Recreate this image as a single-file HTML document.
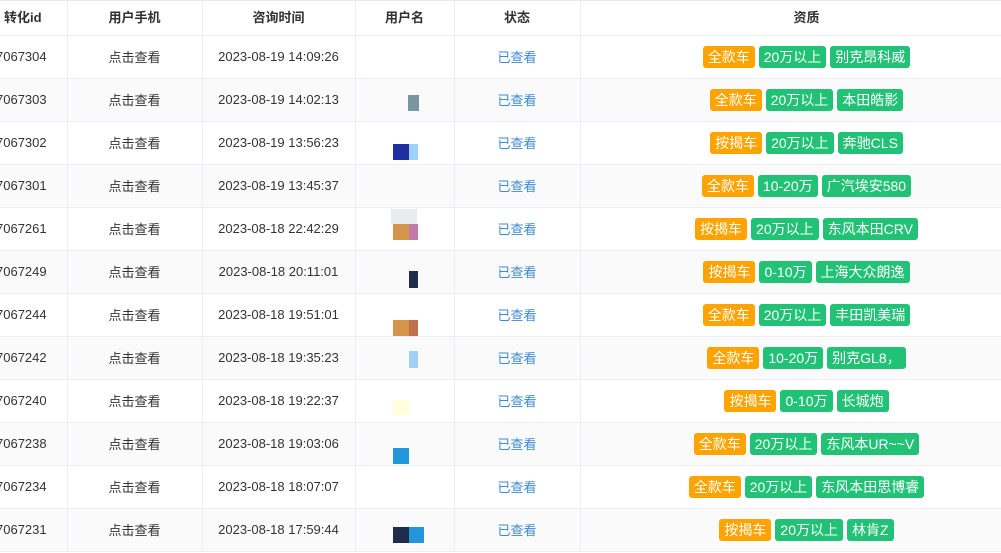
<!DOCTYPE html><html><head><meta charset="utf-8"><style>
body{margin:0;width:1001px;height:553px;overflow:hidden;background:#fff;font-family:"Liberation Sans","Noto Sans CJK SC",sans-serif;font-size:13px;color:#333;position:relative}
table{border-collapse:collapse;table-layout:fixed;width:1033px;position:absolute;left:0;top:0}
td,th{border-right:1px solid #ebeef5;border-bottom:1px solid #ebeef5;text-align:center;padding:0;height:42px;line-height:18px;white-space:nowrap;overflow:hidden;vertical-align:middle}
th{height:34px;font-weight:bold;color:#303133;border-top:1px solid #e8e8e8}
tr:nth-child(odd) td{background:#fafafa}
td.id,th.id{text-align:left;text-indent:-4px}
th.id{text-indent:4px}
.c{display:inline-block;position:relative;top:1px}
.s{color:#3d8ad6}
.t{display:inline-block;height:22px;line-height:22px;padding:0 5px;border-radius:3px;color:#fff;font-size:14px;margin:0 2px;vertical-align:middle}
.o{background:#ffa300}.g{background:#22c276}
.b{position:absolute}
</style></head><body>
<table>
<colgroup><col style="width:67px"><col style="width:135px"><col style="width:153px"><col style="width:99px"><col style="width:126px"><col style="width:453px"></colgroup>
<tr><th class="id">转化id</th><th>用户手机</th><th>咨询时间</th><th>用户名</th><th>状态</th><th>资质</th></tr>
<tr><td class="id">7067304</td><td><span class="c">点击查看</span></td><td>2023-08-19 14:09:26</td><td></td><td class="s"><span class="c">已查看</span></td><td><span class="t o">全款车</span><span class="t g">20万以上</span><span class="t g">别克昂科威</span></td></tr>
<tr><td class="id">7067303</td><td><span class="c">点击查看</span></td><td>2023-08-19 14:02:13</td><td></td><td class="s"><span class="c">已查看</span></td><td><span class="t o">全款车</span><span class="t g">20万以上</span><span class="t g">本田皓影</span></td></tr>
<tr><td class="id">7067302</td><td><span class="c">点击查看</span></td><td>2023-08-19 13:56:23</td><td></td><td class="s"><span class="c">已查看</span></td><td><span class="t o">按揭车</span><span class="t g">20万以上</span><span class="t g">奔驰CLS</span></td></tr>
<tr><td class="id">7067301</td><td><span class="c">点击查看</span></td><td>2023-08-19 13:45:37</td><td></td><td class="s"><span class="c">已查看</span></td><td><span class="t o">全款车</span><span class="t g">10-20万</span><span class="t g">广汽埃安580</span></td></tr>
<tr><td class="id">7067261</td><td><span class="c">点击查看</span></td><td>2023-08-18 22:42:29</td><td></td><td class="s"><span class="c">已查看</span></td><td><span class="t o">按揭车</span><span class="t g">20万以上</span><span class="t g">东风本田CRV</span></td></tr>
<tr><td class="id">7067249</td><td><span class="c">点击查看</span></td><td>2023-08-18 20:11:01</td><td></td><td class="s"><span class="c">已查看</span></td><td><span class="t o">按揭车</span><span class="t g">0-10万</span><span class="t g">上海大众朗逸</span></td></tr>
<tr><td class="id">7067244</td><td><span class="c">点击查看</span></td><td>2023-08-18 19:51:01</td><td></td><td class="s"><span class="c">已查看</span></td><td><span class="t o">全款车</span><span class="t g">20万以上</span><span class="t g">丰田凯美瑞</span></td></tr>
<tr><td class="id">7067242</td><td><span class="c">点击查看</span></td><td>2023-08-18 19:35:23</td><td></td><td class="s"><span class="c">已查看</span></td><td><span class="t o">全款车</span><span class="t g">10-20万</span><span class="t g">别克GL8，</span></td></tr>
<tr><td class="id">7067240</td><td><span class="c">点击查看</span></td><td>2023-08-18 19:22:37</td><td></td><td class="s"><span class="c">已查看</span></td><td><span class="t o">按揭车</span><span class="t g">0-10万</span><span class="t g">长城炮</span></td></tr>
<tr><td class="id">7067238</td><td><span class="c">点击查看</span></td><td>2023-08-18 19:03:06</td><td></td><td class="s"><span class="c">已查看</span></td><td><span class="t o">全款车</span><span class="t g">20万以上</span><span class="t g">东风本UR~~V</span></td></tr>
<tr><td class="id">7067234</td><td><span class="c">点击查看</span></td><td>2023-08-18 18:07:07</td><td></td><td class="s"><span class="c">已查看</span></td><td><span class="t o">全款车</span><span class="t g">20万以上</span><span class="t g">东风本田思博睿</span></td></tr>
<tr><td class="id">7067231</td><td><span class="c">点击查看</span></td><td>2023-08-18 17:59:44</td><td></td><td class="s"><span class="c">已查看</span></td><td><span class="t o">按揭车</span><span class="t g">20万以上</span><span class="t g">林肯Z</span></td></tr>
</table>
<div class="b" style="left:408px;top:95px;width:11px;height:16px;background:#7895a0"></div>
<div class="b" style="left:393px;top:144px;width:16px;height:16px;background:#1f2f9f"></div>
<div class="b" style="left:409px;top:144px;width:9px;height:16px;background:#9fd0ff"></div>
<div class="b" style="left:391px;top:209px;width:26px;height:15px;background:#e8ecef"></div>
<div class="b" style="left:393px;top:224px;width:16px;height:16px;background:#d4944a"></div>
<div class="b" style="left:409px;top:224px;width:9px;height:16px;background:#c07aaa"></div>
<div class="b" style="left:409px;top:271px;width:9px;height:17px;background:#1f2d4a"></div>
<div class="b" style="left:393px;top:320px;width:16px;height:16px;background:#d4944a"></div>
<div class="b" style="left:409px;top:320px;width:9px;height:16px;background:#c0704a"></div>
<div class="b" style="left:409px;top:351px;width:9px;height:17px;background:#9fcff5"></div>
<div class="b" style="left:393px;top:400px;width:16px;height:15px;background:#ffffdd"></div>
<div class="b" style="left:393px;top:448px;width:16px;height:16px;background:#2196db"></div>
<div class="b" style="left:393px;top:527px;width:16px;height:16px;background:#1f2d4a"></div>
<div class="b" style="left:409px;top:527px;width:15px;height:16px;background:#2196db"></div>
</body></html>
